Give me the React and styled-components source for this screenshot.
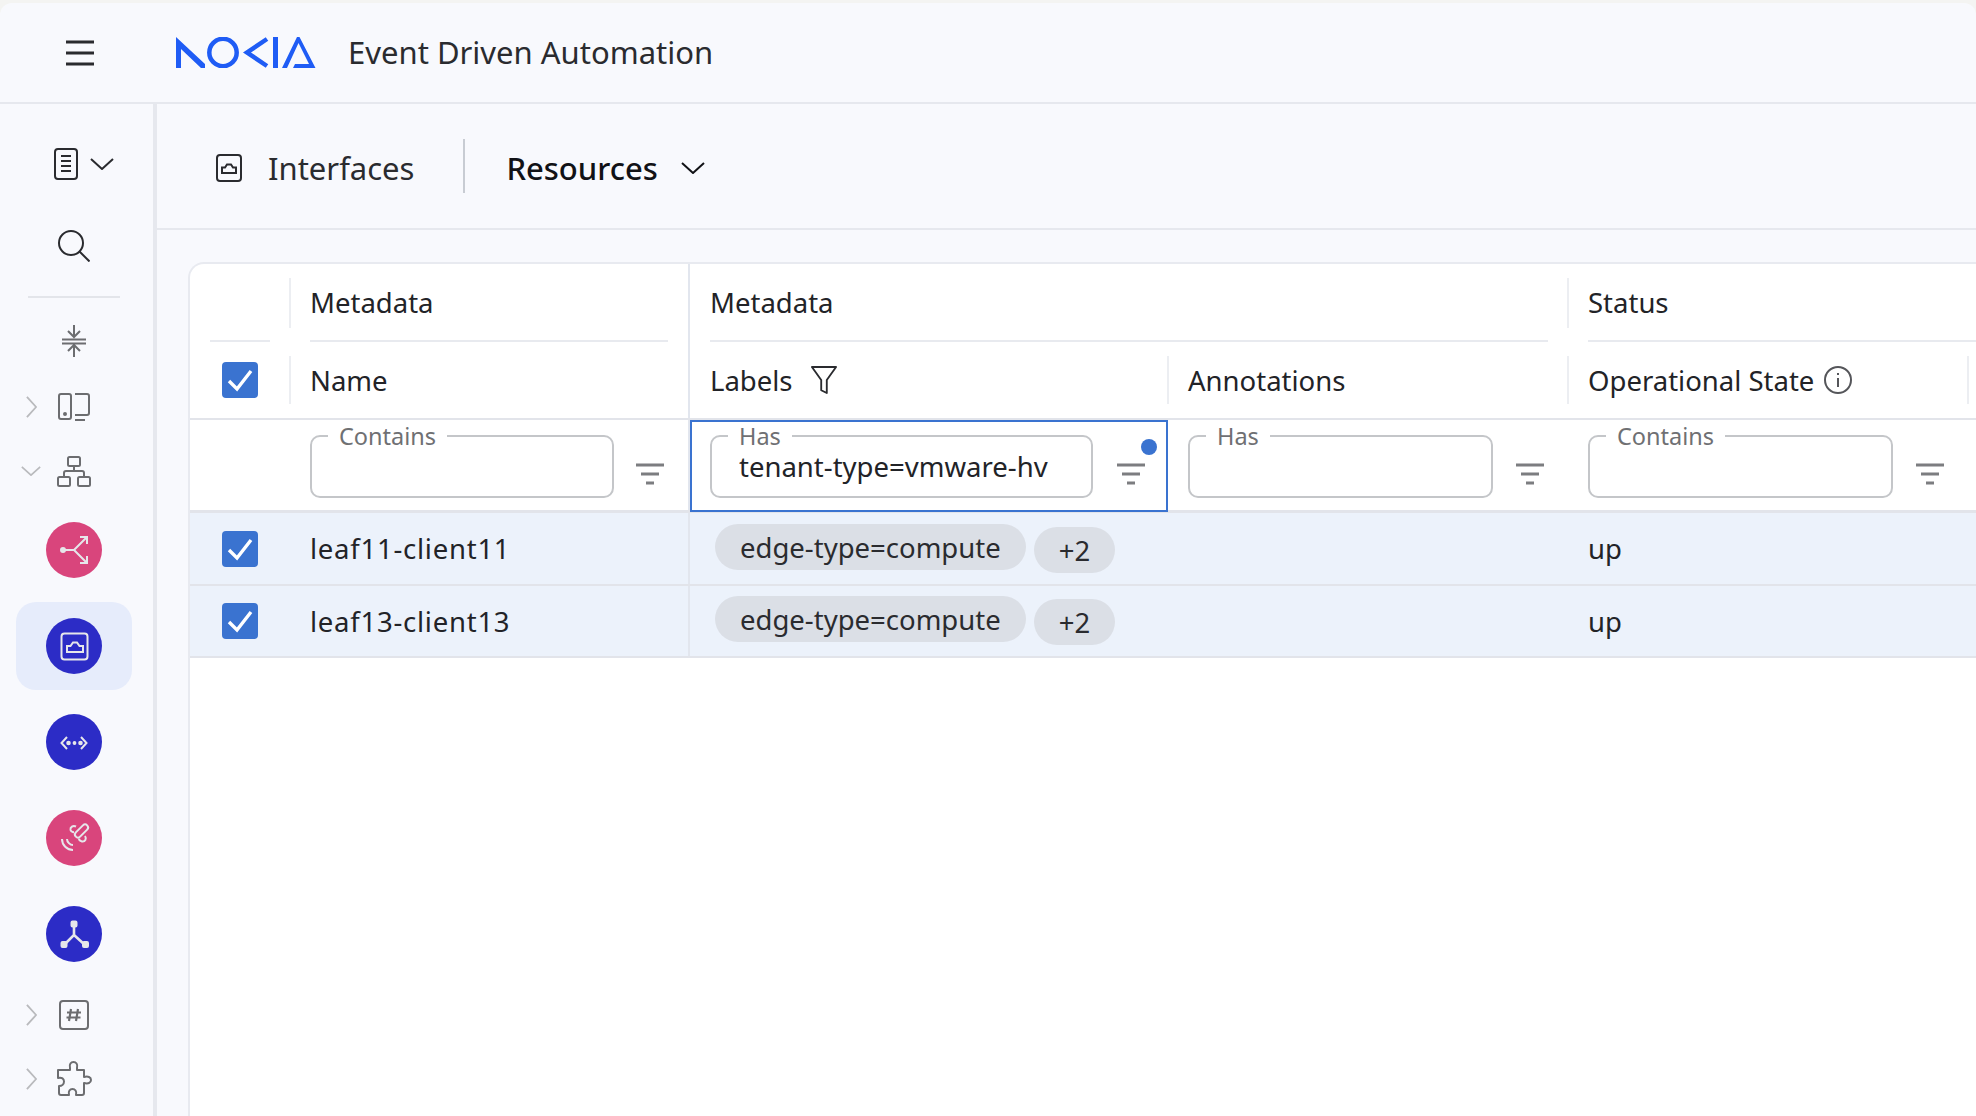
import React from 'react'
import styled, { createGlobalStyle } from 'styled-components'

const GlobalStyle = createGlobalStyle`
  html, body { margin: 0; padding: 0; height: 100%; }
  body {
    background: #f4f4f2;
    font-family: "Noto Sans", "Liberation Sans", sans-serif;
    color: #222327;
    overflow: hidden;
  }
  * { box-sizing: border-box; }
`

const Shell = styled.div`
  height: 1113px;
  margin-top: 3px;
  background: #f8f9fd;
  border-radius: 12px 12px 0 0;
  display: flex;
  flex-direction: column;
  overflow: hidden;
`

const TopBar = styled.header`
  flex: 0 0 101px;
  display: flex;
  align-items: center;
  border-bottom: 2px solid #e6e8ee;
  padding-left: 66px;
`

const Burger = styled.svg`
  width: 28px;
  height: 26px;
  margin-right: 81px;
  color: #2a2b2f;
`

const Logo = styled.svg`
  width: 141px;
  height: 31px;
  margin-right: 32px;
  color: #1f5cf5;
`

const AppTitle = styled.div`
  font-size: 31px;
  line-height: 40px;
  padding-bottom: 2px;
  color: #2a2b2f;
`

const Body = styled.div`
  flex: 1;
  display: flex;
  min-height: 0;
`

const Sidebar = styled.nav`
  flex: 0 0 157px;
  border-right: 4px solid #e6e8ee;
  padding-top: 19px;
  display: flex;
  flex-direction: column;
`

const DocRow = styled.div`
  height: 82px;
  padding-left: 54px;
  display: flex;
  align-items: center;
  gap: 12px;
  color: #2a2b2f;
`

const SideRow = styled.div`
  height: ${p => p.$h}px;
  width: 148px;
  display: grid;
  grid-template-columns: 48px 52px 48px;
  align-items: center;
  justify-items: center;
  color: ${p => (p.$dark ? '#2a2b2f' : '#6c6d70')};
`

const ChevSlot = styled.div`
  padding-left: 14px;
  display: flex;
  align-items: center;
  justify-content: center;
  width: 100%;
  color: #b9babd;
`

const SideRule = styled.div`
  width: 92px;
  height: 2px;
  margin: 9px 0 9px 28px;
  background: #e3e5ea;
`

const CircleGroup = styled.div`
  margin-top: 3px;
  display: flex;
  flex-direction: column;
  gap: 8px;
  margin-bottom: 5px;
`

const NavItem = styled.div`
  width: 116px;
  height: 88px;
  margin-left: 16px;
  border-radius: 20px;
  background: ${p => (p.$active ? '#e6ecfb' : 'transparent')};
  display: flex;
  align-items: center;
  justify-content: center;
`

const Circle = styled.svg`
  width: 56px;
  height: 56px;
  border-radius: 50%;
  background: ${p => (p.$pink ? '#d9457c' : '#2c2cc6')};
  color: #e6e6ea;
`

const Main = styled.main`
  flex: 1;
  min-width: 0;
  display: flex;
  flex-direction: column;
`

const PageHeader = styled.div`
  flex: 0 0 126px;
  border-bottom: 2px solid #e6e8ee;
  display: flex;
  align-items: center;
  padding-left: 58px;
`

const PageTitle = styled.div`
  display: flex;
  align-items: center;
  gap: 25px;
  padding-top: 3px;
  font-size: 31px;
  line-height: 40px;
  color: #2a2b2f;
`

const HeaderRule = styled.div`
  width: 2px;
  height: 54px;
  margin: 0 41px 0 49px;
  background: #c8ccd3;
`

const Resources = styled.div`
  display: flex;
  align-items: center;
  gap: 23px;
  padding-top: 3px;
  font-size: 31px;
  line-height: 40px;
  font-weight: 500;
  color: #111216;
`

const Content = styled.div`
  flex: 1;
  min-height: 0;
  padding: 32px 0 0 31px;
`

const Card = styled.section`
  height: 100%;
  background: #fff;
  border: 2px solid #e8eaf0;
  border-right: none;
  border-bottom: none;
  border-radius: 16px 0 0 0;
  overflow: hidden;
`

const Row = styled.div`
  display: grid;
  grid-template-columns: 100px 400px 478px 400px 400px 1fr;
  height: ${p => p.$h}px;
  background: ${p => (p.$selected ? '#ecf2fb' : 'transparent')};
  border-bottom: ${p => p.$line || 0}px solid #e2e4ea;
`

const Cell = styled.div`
  position: relative;
  grid-column: span ${p => p.$span || 1};
  display: flex;
  align-items: center;
  min-width: 0;
  padding: 0 ${p => (p.$flush ? 0 : 20)}px 0 20px;
  font-size: 27.5px;
  color: #222327;
  border-right: ${p => (p.$split ? '2px solid #e2e6ee' : 'none')};

  ${p => p.$sep && `
    &::before {
      content: "";
      position: absolute;
      left: -1px;
      top: 14px;
      bottom: 14px;
      width: 2px;
      background: #eceef2;
    }
  `}
`

const GroupCell = styled(Cell)`
  align-items: stretch;
`

const GroupLabel = styled.div`
  flex: 1;
  display: flex;
  align-items: center;
  border-bottom: 2px solid #e8eaef;
`

const CheckCell = styled(Cell)`
  justify-content: center;
  padding: 0;
`

const NameCell = styled(Cell)`
  letter-spacing: 0.75px;
`

const Check = styled.svg`
  width: 36px;
  height: 36px;
  border-radius: 4px;
  background: #3a73d0;
  color: #fff;
`

const HeadIcon = styled.svg`
  margin-left: ${p => p.$gap}px;
  color: ${p => p.$color};
  flex: none;
`

const FilterCell = styled(Cell)`
  align-items: flex-start;
  padding: 4px 0 0 20px;
`

const FocusCell = styled(FilterCell)`
  outline: 2px solid #3a73d0;
  outline-offset: -2px;
  margin-bottom: -2px;
  z-index: 1;
`

const Field = styled.fieldset`
  margin: 0;
  padding: 0 0 0 16px;
  width: ${p => p.$w}px;
  height: 74px;
  border: 2px solid #c4c6c9;
  border-radius: 10px;
  flex: none;
`

const FieldLabel = styled.legend`
  padding: 0 11px;
  font-size: 23.5px;
  line-height: 24px;
  color: #6f7073;
`

const FieldInput = styled.input`
  border: none;
  outline: none;
  background: transparent;
  width: calc(100% - 11px);
  margin-left: 11px;
  padding: 0;
  height: 36px;
  font: inherit;
  font-size: 27.5px;
  color: #222327;
`

const FilterBtn = styled.div`
  position: relative;
  margin: 32px 0 0 ${p => p.$gap}px;
  width: 28px;
  height: 22px;
  color: #7c7d80;
`

const Dot = styled.span`
  position: absolute;
  right: -12px;
  top: -17px;
  width: 16px;
  height: 16px;
  border-radius: 50%;
  background: #3a73d0;
`

const LabelCell = styled(Cell)`
  align-items: flex-start;
  padding: ${p => p.$top}px 0 0 25px;
  gap: 8px;
`

const Chip = styled.span`
  height: 46px;
  margin-top: ${p => p.$shift || 0}px;
  padding: 0 ${p => p.$pad}px;
  border-radius: 23px;
  background: #dbdfe6;
  display: flex;
  align-items: center;
  font-size: 27.5px;
  color: #2a2b2f;
`

const Chevron = ({ dir = 'down', size = 24, color, width = 2 }) => (
  <svg width={dir === 'down' ? size : size / 2} height={dir === 'down' ? size / 2 : size} viewBox={dir === 'down' ? '0 0 24 12' : '0 0 12 24'} fill="none" stroke={color || 'currentColor'} strokeWidth={width}>
    {dir === 'down' ? <path d="M1 1 L12 11 L23 1" /> : <path d="M1 1 L11 12 L1 23" />}
  </svg>
)

const PortIcon = () => (
  <svg width="28" height="28" viewBox="0 0 28 28" fill="none" stroke="currentColor" strokeWidth="2">
    <rect x="2" y="1" width="24" height="26" rx="3" />
    <path d="M7 19 V13.5 H10 L12 10.5 H16 L18 13.5 H21 V19 Z" />
  </svg>
)

const FilterLines = () => (
  <svg width="28" height="22" viewBox="0 0 28 22" stroke="currentColor" strokeWidth="3">
    <path d="M0 2 H28 M5 11 H23 M10 20 H18" />
  </svg>
)

const circleIcons = {
  split: (
    <>
      <circle cx="17" cy="28" r="2" fill="currentColor" />
      <path d="M17 28 H28 L41 15 M34 15 H41 V22 M28 28 L41 41 M41 34 V41 H34" />
    </>
  ),
  port: (
    <>
      <rect x="15.5" y="15.5" width="26" height="26" rx="3" />
      <path d="M21 34 V28 H24.5 L27 24.5 H31 L33.5 28 H37 V34 Z" />
    </>
  ),
  code: (
    <>
      <path d="M21 23 L15.5 29 L21 35 M35 23 L40.5 29 L35 35" />
      <circle cx="22.5" cy="29" r="1.3" fill="currentColor" />
      <circle cx="34.5" cy="29" r="1.3" fill="currentColor" />
      <circle cx="28.5" cy="29" r="0.9" fill="currentColor" />
    </>
  ),
  satellite: (
    <>
      <rect x="27.5" y="18" width="16" height="6" rx="3" transform="rotate(-45 35.5 21)" />
      <path d="M30 16.5 C27 15 24 17 24.5 20 C25 21.5 26 22.5 28 22 M39 26 C41 29 39 32 36 31.5 C34 31 33 30 33 28.5 M16 29 C16 35 21 40 27 40 M21 29 C21 32 24 35 27 35" />
    </>
  ),
  nodes: (
    <>
      <path d="M28 19 V29 L18 39 M28 29 L39 39" strokeWidth="2.6" />
      <rect x="25.5" y="15.5" width="5" height="5" rx="1" fill="currentColor" />
      <rect x="15.5" y="36" width="5" height="5" rx="1" fill="currentColor" />
      <rect x="37" y="36" width="5" height="5" rx="1" fill="currentColor" />
    </>
  ),
}

const navItems = [
  { id: 'split', pink: true },
  { id: 'port', active: true },
  { id: 'code' },
  { id: 'satellite', pink: true },
  { id: 'nodes' },
]

const columns = [
  { label: 'Name', field: 'Contains', w: 304, gap: 22 },
  { label: 'Labels', field: 'Has', w: 383, gap: 24, value: 'tenant-type=vmware-hv', focus: true, dot: true },
  { label: 'Annotations', field: 'Has', w: 305, gap: 23, sep: true },
  { label: 'Operational State', field: 'Contains', w: 305, gap: 23, sep: true },
]

const rows = [
  { name: 'leaf11-client11', top: 11, h: 73 },
  { name: 'leaf13-client13', top: 10, h: 72 },
]

const CheckBox = () => (
  <Check viewBox="0 0 36 36" fill="none" stroke="currentColor" strokeWidth="3.4">
    <path d="M7 19 L15 27 L29 9" />
  </Check>
)

const App = () => {
  return (
    <>
      <GlobalStyle />
      <Shell>
        <TopBar>
          <Burger viewBox="0 0 28 26" stroke="currentColor" strokeWidth="3">
            <path d="M0 2 H28 M0 13 H28 M0 24 H28" />
          </Burger>
          <Logo viewBox="0 0 141 31" fill="currentColor">
            <path d="M1 0 L30 27 V31 H26 L6 12 V31 H1 Z" />
            <circle cx="48" cy="15.5" r="13.7" fill="none" stroke="currentColor" strokeWidth="4.5" />
            <path d="M92 2 L72 15.5 L92 29" fill="none" stroke="currentColor" strokeWidth="4.5" />
            <rect x="98" y="0" width="5" height="31" />
            <path d="M107 31 L122 0 H124.5 L140.5 31 H118 L120 27 H134 L123.5 6 L112 31 Z" />
          </Logo>
          <AppTitle>Event Driven Automation</AppTitle>
        </TopBar>
        <Body>
          <Sidebar>
            <DocRow>
              <svg width="24" height="32" viewBox="0 0 24 32" fill="none" stroke="currentColor" strokeWidth="2">
                <rect x="1" y="1" width="22" height="30" rx="3" />
                <path d="M7 8 H17 M7 13 H17 M7 18 H17 M7 23 H17" />
              </svg>
              <Chevron />
            </DocRow>
            <SideRow $h={82} $dark>
              <span />
              <svg width="32" height="32" viewBox="0 0 32 32" fill="none" stroke="currentColor" strokeWidth="2">
                <circle cx="13" cy="13" r="12" />
                <path d="M21.5 21.5 L31.5 31.5" />
              </svg>
            </SideRow>
            <SideRule />
            <SideRow $h={68}>
              <span />
              <svg width="24" height="34" viewBox="0 0 24 34" fill="none" stroke="currentColor" strokeWidth="2">
                <path d="M12 1 V12 M6 7 L12 13 L18 7 M0 15.5 H24 M0 19.5 H24 M12 33 V22 M6 27 L12 21 L18 27" />
              </svg>
            </SideRow>
            <SideRow $h={64}>
              <ChevSlot><Chevron dir="right" size={22} /></ChevSlot>
              <svg width="32" height="28" viewBox="0 0 32 28" fill="none" stroke="currentColor" strokeWidth="2">
                <rect x="1" y="1" width="12" height="25" rx="2" />
                <circle cx="7" cy="21" r="1" fill="currentColor" />
                <path d="M17 1 H29 A2 2 0 0 1 31 3 V20 A2 2 0 0 1 29 22 H17 M17 27 H27" />
              </svg>
            </SideRow>
            <SideRow $h={64}>
              <ChevSlot><Chevron size={20} /></ChevSlot>
              <svg width="34" height="31" viewBox="0 0 34 31" fill="none" stroke="currentColor" strokeWidth="2">
                <rect x="11" y="1" width="12" height="9" rx="1.5" />
                <rect x="1" y="21" width="12" height="9" rx="1.5" />
                <rect x="21" y="21" width="12" height="9" rx="1.5" />
                <path d="M17 10 V15 M7 21 V17 A2 2 0 0 1 9 15 H25 A2 2 0 0 1 27 17 V21" />
              </svg>
            </SideRow>
            <CircleGroup>
              {navItems.map(item => (
                <NavItem key={item.id} $active={item.active}>
                  <Circle $pink={item.pink} viewBox="0 0 56 56" fill="none" stroke="currentColor" strokeWidth="2">
                    {circleIcons[item.id]}
                  </Circle>
                </NavItem>
              ))}
            </CircleGroup>
            <SideRow $h={64}>
              <ChevSlot><Chevron dir="right" size={22} /></ChevSlot>
              <svg width="30" height="30" viewBox="0 0 30 30" fill="none" stroke="currentColor" strokeWidth="2">
                <rect x="1" y="1" width="28" height="28" rx="3" />
                <path d="M12 9 L10 21 M19 9 L17 21 M8 12.5 H22 M7.5 17.5 H21.5" strokeWidth="2.2" />
              </svg>
            </SideRow>
            <SideRow $h={64}>
              <ChevSlot><Chevron dir="right" size={22} /></ChevSlot>
              <svg width="36" height="36" viewBox="0 0 36 36" fill="none" stroke="currentColor" strokeWidth="2">
                <path d="M14 7 C13 3 15 1 17.5 1 C20 1 22 3 21 7 L21 9 H28 V16 C32 15 35 16 35 19 C35 22 32 23 28 22 V32 A2 2 0 0 1 26 34 H20 C21 30 19 28 16.5 28 C14 28 12 30 13 34 H5 A2 2 0 0 1 3 32 V25 C6 25 8 23 8 20.5 C8 18 6 16 2 17 L2 9 H14 Z" strokeLinejoin="round" />
              </svg>
            </SideRow>
          </Sidebar>
          <Main>
            <PageHeader>
              <PageTitle>
                <PortIcon />
                Interfaces
              </PageTitle>
              <HeaderRule />
              <Resources>
                Resources
                <Chevron size={24} />
              </Resources>
            </PageHeader>
            <Content>
              <Card>
                <Row $h={78}>
                  <GroupCell><GroupLabel /></GroupCell>
                  <GroupCell $sep $split><GroupLabel>Metadata</GroupLabel></GroupCell>
                  <GroupCell $span={2}><GroupLabel>Metadata</GroupLabel></GroupCell>
                  <GroupCell $span={2} $sep $flush><GroupLabel>Status</GroupLabel></GroupCell>
                </Row>
                <Row $h={78} $line={2}>
                  <CheckCell><CheckBox /></CheckCell>
                  {columns.map((col, i) => (
                    <Cell key={col.label} $sep={i !== 1} $split={i === 0}>
                      {col.label}
                      {col.label === 'Labels' && (
                        <HeadIcon $gap={18} $color="#2a2b2f" width="26" height="28" viewBox="0 0 28 30" fill="none" stroke="currentColor" strokeWidth="2">
                          <path d="M1 1 H27 L17 15 V29 L11 26 V15 Z" strokeLinejoin="round" />
                        </HeadIcon>
                      )}
                      {col.label === 'Operational State' && (
                        <HeadIcon $gap={10} $color="#55565a" width="28" height="28" viewBox="0 0 28 28" fill="none" stroke="currentColor" strokeWidth="2">
                          <circle cx="14" cy="14" r="13" />
                          <path d="M14 12 V21 M14 7 V9" />
                        </HeadIcon>
                      )}
                    </Cell>
                  ))}
                  <Cell $sep />
                </Row>
                <Row $h={93} $line={3}>
                  <Cell />
                  {columns.map((col, i) => {
                    const Wrap = col.focus ? FocusCell : FilterCell
                    return (
                      <Wrap key={col.label} $split={i === 0}>
                        <Field $w={col.w}>
                          <FieldLabel>{col.field}</FieldLabel>
                          <FieldInput readOnly value={col.value || ''} />
                        </Field>
                        <FilterBtn $gap={col.gap}>
                          <FilterLines />
                          {col.dot && <Dot />}
                        </FilterBtn>
                      </Wrap>
                    )
                  })}
                </Row>
                {rows.map(row => (
                  <Row key={row.name} $h={row.h} $line={2} $selected>
                    <CheckCell><CheckBox /></CheckCell>
                    <NameCell $split>{row.name}</NameCell>
                    <LabelCell $top={row.top}>
                      <Chip $pad={25}>edge-type=compute</Chip>
                      <Chip $pad={25} $shift={3}>+2</Chip>
                    </LabelCell>
                    <Cell />
                    <Cell>up</Cell>
                    <Cell />
                  </Row>
                ))}
              </Card>
            </Content>
          </Main>
        </Body>
      </Shell>
    </>
  )
}

export default App
